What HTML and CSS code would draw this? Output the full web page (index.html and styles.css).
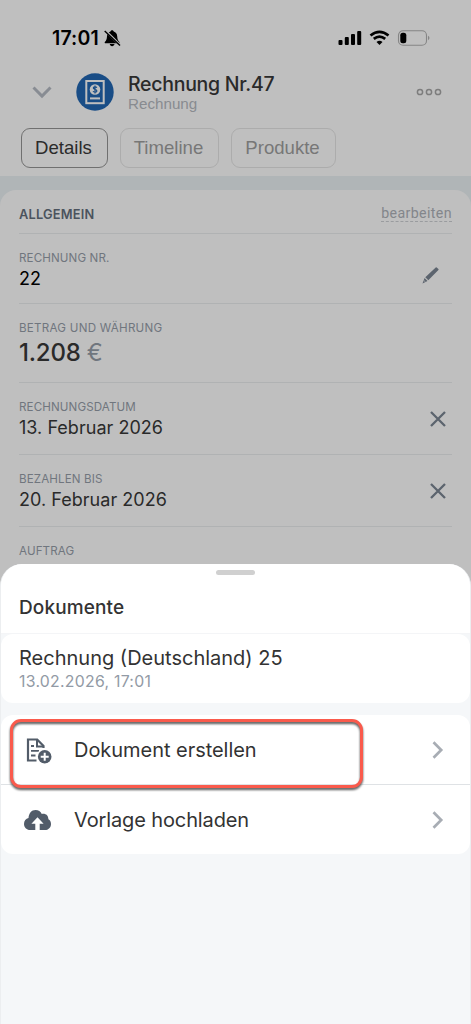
FILE: index.html
```html
<!DOCTYPE html>
<html lang="de">
<head>
<meta charset="utf-8">
<meta name="viewport" content="width=device-width, initial-scale=1">
<title>Rechnung Nr.47</title>
<link rel="stylesheet" href="styles.css">
</head>
<body>
<main class="screen">
  <div class="statusbar">
    <span class="clock">17:01</span>
    <svg class="bell" width="17" height="17" viewBox="0 0 17 17"><path d="M8.1.3c.9 0 1.5.6 1.6 1.3 2.2.6 3.4 2.3 3.5 4.6.1 3.2 1 4.4 2 5.5.6.7.4 1.6-.6 1.6H1.6c-1 0-1.2-.9-.6-1.6 1-1.1 1.9-2.300 2-5.500C3.100 3.900 4.300 2.200 6.500 1.600 6.600.9 7.200.3 8.100.3zM5.700 14h4.800c-.3 1.400-1.200 2.200-2.400 2.200S6 15.400 5.700 14z"/><path d="M1.500.7 16 15" stroke="#bfbfbf" stroke-width="2.400"/><path d="M.7 1 16 15.600" stroke="#000" stroke-width="1.400"/></svg>
    <svg class="indicators" width="94" height="17" viewBox="0 0 94 17"><rect x="0.500" y="10" width="4" height="5" rx="1"/><rect x="6.800" y="7" width="4" height="8" rx="1"/><rect x="13" y="4" width="4" height="11" rx="1"/><rect x="19.200" y="1" width="4" height="14" rx="1"/><path d="M32.500 5.500Q41.500-1.700 50.500 5.500M35.800 8.900Q41.500 4.300 47.200 8.900" fill="none" stroke="#000" stroke-width="2.700"/><path d="M38.500 11.900q3-2.400 6 0l-3 3.200z"/><rect x="60.500" y=".7" width="28" height="14.500" rx="4.500" fill="none" stroke="#858585" stroke-width="1.100"/><rect x="62.300" y="2.700" width="6" height="10.500" rx="2.500"/><path d="M90 5.700q3 2.200 0 4.500z" fill="#858585"/></svg>
  </div>

  <header class="header">
    <svg class="chevron-down" width="20" height="13" viewBox="0 0 20 13"><path d="m1.500 1.500 8.500 8.600 8.500-8.600" fill="none" stroke="#888c93" stroke-width="2.900"/></svg>
    <svg class="avatar" width="38" height="38" viewBox="0 0 38 38"><circle cx="19" cy="19" r="18.700" fill="#194d86"/><rect x="10.300" y="8" width="17.400" height="22.200" fill="none" stroke="#bfbfbf" stroke-width="2"/><circle cx="19" cy="16.500" r="5.300" fill="#bfbfbf"/><rect x="14" y="24.400" width="10" height="2" fill="#bfbfbf"/><path d="M20.800 14.800c-.5-1.400-3.500-1.300-3.500.2 0 1.700 3.600.9 3.600 2.900 0 1.600-3.300 1.600-3.800.2M19 12.600v7.800" fill="none" stroke="#194d86" stroke-width="1.200"/></svg>
    <div class="heading"><h1 class="title">Rechnung Nr.47</h1><span class="subtitle">Rechnung</span></div>
    <svg class="more" width="26" height="8" viewBox="0 0 26 8"><g fill="none" stroke="#7d7d7d" stroke-width="1.500"><circle cx="4" cy="4" r="2.600"/><circle cx="13" cy="4" r="2.600"/><circle cx="22" cy="4" r="2.600"/></g></svg>
  </header>

  <nav class="tabs">
    <span class="tab tab-active">Details</span>
    <span class="tab tab-timeline">Timeline</span>
    <span class="tab tab-products">Produkte</span>
  </nav>

  <div class="body-area">
    <section class="card">
      <div class="section-head"><h2 class="section-title">ALLGEMEIN</h2><span class="edit">bearbeiten</span></div>
      <div class="field field-number">
        <div><div class="label label-number">RECHNUNG NR.</div><div class="value value-number">22</div></div>
        <svg class="pencil" width="17" height="17" viewBox="0 0 17 17"><path d="M13.700.4q.5-.4 1 0l1.700 1.700q.5.500 0 1L6.300 13.200l-3-3zM2.600 11l2.900 2.900L.5 16.400z" fill="#5c646e"/><path d="m1.800 13.400 1.800 1.700" stroke="#bfbfbf" stroke-width=".7"/></svg>
      </div>
      <div class="field field-amount">
        <div><div class="label label-amount">BETRAG UND WÄHRUNG</div><div class="amount">1.208 <span class="currency">€</span></div></div>
      </div>
      <div class="field field-date">
        <div><div class="label label-date">RECHNUNGSDATUM</div><div class="value">13. Februar 2026</div></div>
        <svg class="clear" width="16" height="16" viewBox="0 0 16 16"><path d="m1 1 14 14M15 1 1 15" stroke="#5c646e" stroke-width="2.300"/></svg>
      </div>
      <div class="field field-date">
        <div><div class="label label-due">BEZAHLEN BIS</div><div class="value">20. Februar 2026</div></div>
        <svg class="clear" width="16" height="16" viewBox="0 0 16 16"><path d="m1 1 14 14M15 1 1 15" stroke="#5c646e" stroke-width="2.300"/></svg>
      </div>
      <div class="field field-order"><div class="label">AUFTRAG</div></div>
    </section>
  </div>

  <section class="sheet">
    <div class="sheet-head"><span class="handle"></span><h2 class="sheet-title">Dokumente</h2></div>
    <div class="document"><div class="doc-name">Rechnung (Deutschland) 25</div><div class="doc-date">13.02.2026, 17:01</div></div>
    <div class="actions">
      <div class="action action-create">
        <svg class="action-icon" width="30" height="28" viewBox="0 0 30 28"><path d="M13.500 24.500H5V3.500h9.200l6.300 6.500v2" fill="none" stroke="#525c69" stroke-width="2.200"/><path d="M14 3.500v7h6.500" fill="none" stroke="#525c69" stroke-width="2"/><path d="M8 10h3M8 14.800h8M8 19.500h4.500" stroke="#525c69" stroke-width="1.800"/><circle cx="21.700" cy="20.700" r="7.800" fill="#fff"/><circle cx="21.700" cy="20.700" r="6.800" fill="#525c69"/><path d="M17.700 20.700h8M21.700 16.700v8" stroke="#fff" stroke-width="2"/></svg>
        <span class="action-label label-create">Dokument erstellen</span>
        <svg class="chevron" width="12" height="18" viewBox="0 0 12 18"><path d="m1.500 1.200 7.700 7.800-7.700 7.800" fill="none" stroke="#a8adb4" stroke-width="2.700"/></svg>
      </div>
      <div class="action action-upload">
        <svg class="action-icon" width="30" height="28" viewBox="0 0 30 28"><path d="M7.500 24C4 24 1 21.500 1 17.900c0-3 1.900-5.200 4.500-5.800C5.700 7.500 8.500 4 12.500 4c3 0 5.100 1.600 6.300 4 4-.7 6.600 1.500 6.600 5.200 1.600.8 2.600 2.500 2.600 4.700 0 3.500-2.600 6.100-6.100 6.100z" fill="#525c69"/><path d="m14.500 11.200 6.100 6.600h-3.900v6.400h-4.400v-6.400H8.400z" fill="#fff"/></svg>
        <span class="action-label label-upload">Vorlage hochladen</span>
        <svg class="chevron" width="12" height="18" viewBox="0 0 12 18"><path d="m1.500 1.200 7.700 7.800-7.700 7.800" fill="none" stroke="#a8adb4" stroke-width="2.700"/></svg>
      </div>
      <div class="highlight"></div>
    </div>
  </section>
</main>
</body>
</html>
```
FILE: styles.css
```css
* { box-sizing: border-box; }
body { margin: 0; background: #bfbfbf; font-family: Inter, "Liberation Sans", sans-serif; }
h1, h2 { margin: 0; }
svg { display: block; flex: none; }
.screen { position: relative; width: 471px; height: 1024px; overflow: hidden; background: #bfbfbf; color: #2a2a2a; white-space: nowrap; }

.statusbar { display: flex; height: 62px; padding: 28px 40px 0 52px; align-items: flex-start; color: #000; }
.clock { width: 52px; font-size: 19.500px; line-height: 21px; font-weight: 600; letter-spacing: .15px; }
.bell { margin-top: 2px; }
.indicators { margin: 2px -1px 0 auto; }

.header { display: flex; height: 66px; padding: 10px 29px 0 32px; align-items: flex-start; }
.chevron-down { margin-top: 14px; }
.avatar { margin: 1px 14px 0 24px; }
.heading { flex: 1; }
.title { font-size: 19.500px; line-height: 24px; font-weight: 500; letter-spacing: -.28px; }
.subtitle { display: block; font: 15.200px/16px "Liberation Sans", sans-serif; color: #888b90; }
.more { margin-top: 16px; }

.tabs { display: flex; height: 48px; padding: 0 21px; gap: 12px; }
.tab { height: 40px; width: 105px; padding-right: 2px; border: 1px solid #acacac; border-radius: 9px; font: 18.600px/37px "Liberation Sans", sans-serif; text-align: center; color: #777; }
.tab-active { width: 87px; border-color: #707070; color: #2b2b2b; }
.tab-timeline { width: 99px; }

.body-area { height: 848px; padding-top: 14px; background: #b0b5b7; }
.card { height: 834px; padding: 0 19px; border-radius: 16px 16px 0 0; background: #bfbfbf; }
.section-head { display: flex; height: 44px; padding-top: 15px; border-bottom: 1px solid #b0b2b3; justify-content: space-between; align-items: flex-start; }
.section-title { font-size: 12.800px; line-height: 20px; font-weight: 600; letter-spacing: .2px; color: #4b535d; }
.edit { font: 14.200px/16px Roboto, sans-serif; letter-spacing: .38px; color: #83868b; height: 17px; border-bottom: 1px dashed #9a9c9f; }
.field { display: flex; justify-content: space-between; border-bottom: 1px solid #b0b2b3; }
.field-number { height: 70px; padding: 16px 13px 0 0; }
.field-amount { height: 79px; padding-top: 16px; }
.field-date { height: 72px; padding: 16px 6px 0 0; }
.field-order { padding-top: 16px; border: 0; }
.label { font-size: 11.600px; line-height: 16px; letter-spacing: .12px; color: #70767e; }
.label-amount { letter-spacing: .25px; }
.value { font-size: 18px; line-height: 25px; letter-spacing: .03px; }
.value-number { color: #000; }
.amount { font-size: 24px; line-height: 33px; font-weight: 500; letter-spacing: -.2px; }
.currency { font-weight: 400; color: #70767e; }
.pencil { margin-top: 17px; }
.clear { margin-top: 12px; }

.sheet { position: absolute; left: 0; right: 0; top: 564px; bottom: 0; overflow: hidden; border: solid #eceef0; border-width: 0 1px; border-radius: 22px 22px 0 0; background: #f5f7f9; color: #333; }
.sheet-head { display: flex; flex-direction: column; height: 70px; padding-top: 6px; border-bottom: 1px solid #f4f5f7; background: #fff; }
.handle { width: 39px; height: 5px; border-radius: 3px; background: #d0d0d0; align-self: center; }
.sheet-title { margin: 20px 0 0 18px; font-size: 19px; line-height: 25px; font-weight: 500; letter-spacing: .12px; }
.document { height: 69px; margin-bottom: 12px; padding: 11px 18px; border-radius: 12px; background: #fff; }
.doc-name { font-size: 20px; line-height: 26px; }
.doc-date { font-size: 15.800px; line-height: 21px; letter-spacing: .28px; color: #929aa5; }
.actions { position: relative; border-radius: 12px; background: #fff; }
.action { display: flex; height: 70px; padding: 0 26px 0 22px; align-items: center; }
.action-create { border-bottom: 1px solid #dfe2e5; }
.action-upload { height: 69px; }
.action-label { flex: 1; margin-left: 21px; font-size: 20px; line-height: 28px; }
.label-create { letter-spacing: -.04px; }
.label-upload { letter-spacing: -.12px; }
.highlight { position: absolute; left: 9px; top: 4px; width: 353px; height: 69px; border: 3px solid #fa5a4c; border-radius: 11px; filter: drop-shadow(0 2px 1px #555); }
```
